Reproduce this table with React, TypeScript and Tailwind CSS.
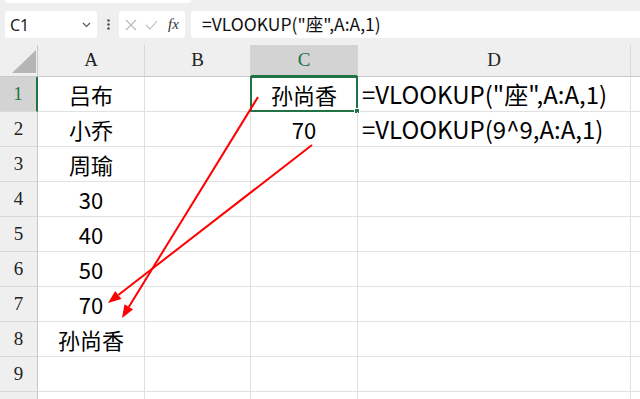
import React from "react";

const cellFont = "font-['Noto_Sans_CJK_SC','Noto_Sans',sans-serif]";

const cols = [
  { key: "A", w: "w-[107px]" },
  { key: "B", w: "w-[106px]" },
  { key: "C", w: "w-[107px]" },
  { key: "D", w: "w-[273px]" },
];

const rows: { a?: string; c?: string; d?: string }[] = [
  { a: "吕布", c: "孙尚香", d: '=VLOOKUP("座",A:A,1)' },
  { a: "小乔", c: "70", d: "=VLOOKUP(9^9,A:A,1)" },
  { a: "周瑜" },
  { a: "30" },
  { a: "40" },
  { a: "50" },
  { a: "70" },
  { a: "孙尚香" },
  {},
  {},
];

function Toolbar() {
  return (
    <div className="relative h-[45px] bg-[#efefef] flex items-start pt-[11px] pl-[5px] gap-0">
      <div className="absolute left-[5px] top-0 w-[186px] h-[3px] bg-white rounded-b-[3px]" />
      {/* name box */}
      <div className="w-[92px] h-[27px] bg-white rounded-[3px] flex items-center justify-between pl-[5px] pr-[6px]">
        <span className="text-[16px] text-[#222] font-['Noto_Sans',sans-serif]">C1</span>
        <svg width="9" height="6" viewBox="0 0 9 6" fill="none">
          <path d="M1 1l3.5 3.5L8 1" stroke="#555" strokeWidth="1.2" />
        </svg>
      </div>
      <div className="w-[22px] h-[27px] flex items-center justify-center">
        <svg width="3" height="11" viewBox="0 0 3 11">
          <circle cx="1.5" cy="1.5" r="1.3" fill="#555" />
          <circle cx="1.5" cy="5.5" r="1.3" fill="#555" />
          <circle cx="1.5" cy="9.5" r="1.3" fill="#555" />
        </svg>
      </div>
      {/* cancel / enter / fx */}
      <div className="w-[66px] h-[27px] bg-white rounded-[3px] flex items-center pl-[6px] gap-[8px]">
        <svg width="12" height="12" viewBox="0 0 12 12" fill="none">
          <path d="M1 1l10 10M11 1L1 11" stroke="#b9b9b9" strokeWidth="1.1" />
        </svg>
        <svg width="13" height="10" viewBox="0 0 13 10" fill="none">
          <path d="M1 5l4 4 7-8" stroke="#b9b9b9" strokeWidth="1.1" />
        </svg>
        <span className="text-[15px] italic text-[#333] font-['Liberation_Serif',serif] ml-[2px]">fx</span>
      </div>
      <div className="ml-[6px] flex-1 h-[27px] bg-white rounded-l-[3px] flex items-center pl-[11px]">
        <span className={`text-[17.5px] text-[#111] ${cellFont}`}>=VLOOKUP("座",A:A,1)</span>
      </div>
    </div>
  );
}

function HeaderRow() {
  return (
    <div className="flex h-[32px] bg-[#efefef]">
      <div className="w-[38px] shrink-0 border-r border-b border-[#c8c8c8] relative">
        <svg className="absolute left-[12px] top-[5px]" width="24" height="23" viewBox="0 0 24 23">
          <path d="M24 0V23H0Z" fill="#b5b5b5" />
        </svg>
      </div>
      {cols.map((c) => {
        const sel = c.key === "C";
        return (
          <div
            key={c.key}
            className={`${c.w} shrink-0 flex items-center justify-center border-r border-[#d8d8d8] text-[19px] font-['Liberation_Serif',serif] ${
              sel ? "bg-[#d3d3d3] text-[#217346] border-b-2 border-b-[#217346]" : "text-[#222] border-b border-b-[#c8c8c8]"
            }`}
          >
            {c.key}
          </div>
        );
      })}
      <div className="flex-1 border-b border-[#c8c8c8]" />
    </div>
  );
}

function Row({ n, r }: { n: number; r: { a?: string; c?: string; d?: string } }) {
  const sel = n === 1;
  return (
    <div className="flex h-[35px]">
      <div
        className={`w-[38px] shrink-0 flex items-center justify-center text-[19px] font-['Liberation_Serif',serif] border-b border-[#d8d8d8] ${
          sel ? "bg-[#d3d3d3] text-[#217346] border-r-2 border-r-[#217346]" : "bg-[#efefef] text-[#222] border-r border-r-[#c8c8c8]"
        }`}
      >
        {n < 10 ? n : null}
      </div>
      <div className={`w-[107px] shrink-0 border-r border-b border-[#e1e1e1] flex items-center justify-center text-[22px] text-black ${cellFont}`}>
        {r.a}
      </div>
      <div className="w-[106px] shrink-0 border-r border-b border-[#e1e1e1]" />
      <div className={`relative w-[107px] shrink-0 border-r border-b border-[#e1e1e1] flex items-center justify-center text-[22px] text-black ${cellFont}`}>
        {r.c}
        {sel && (
          <div className="absolute -left-px -top-px -right-px -bottom-px border-2 border-[#217346]">
            <div className="absolute -right-[4px] -bottom-[4px] w-[6px] h-[6px] bg-[#217346] border border-white" />
          </div>
        )}
      </div>
      <div className={`w-[273px] shrink-0 border-r border-b border-[#e1e1e1] flex items-center pl-[4px] text-[24px] text-black whitespace-nowrap ${cellFont}`}>
        {r.d}
      </div>
      <div className="flex-1 border-b border-[#e1e1e1]" />
    </div>
  );
}

function Arrows() {
  return (
    <svg className="absolute inset-0 pointer-events-none" width="640" height="399" viewBox="0 0 640 399">
      <line x1="258" y1="97" x2="128.8" y2="306.9" stroke="#ff0000" strokeWidth="2" />
      <polygon points="122,318 133.1,309.5 124.5,304.3" fill="#ff0000" />
      <line x1="312" y1="145" x2="118.3" y2="295" stroke="#ff0000" strokeWidth="2" />
      <polygon points="108,303 121.4,299 115.2,291" fill="#ff0000" />
    </svg>
  );
}

export default function App() {
  return (
    <div className="relative w-[640px] h-[399px] overflow-hidden bg-white">
      <Toolbar />
      <HeaderRow />
      {rows.map((r, i) => (
        <Row key={i} n={i + 1} r={r} />
      ))}
      <Arrows />
    </div>
  );
}
